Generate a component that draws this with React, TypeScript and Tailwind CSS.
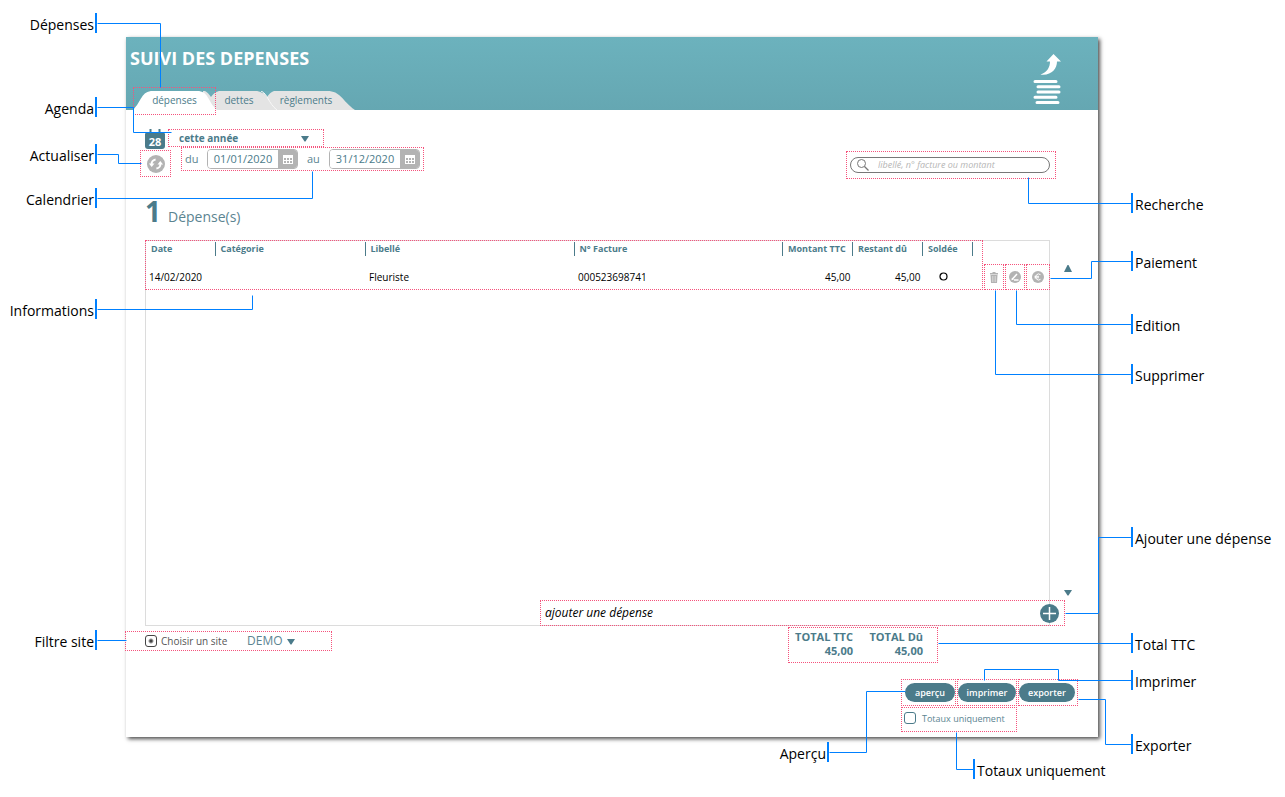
import React, { useState } from "react";

type Side = "left" | "right";

// Callouts hang on the nearest window edge, so they stay put when the sheet grows
const callouts: { text: string; side: Side; place: string }[] = [
  { text: "Dépenses", side: "left", place: "top-[13px] left-0 w-[97px]" },
  { text: "Agenda", side: "left", place: "top-[97px] left-0 w-[97px]" },
  { text: "Actualiser", side: "left", place: "top-[144px] left-0 w-[97px]" },
  { text: "Calendrier", side: "left", place: "top-[188px] left-0 w-[97px]" },
  { text: "Informations", side: "left", place: "top-[299px] left-0 w-[97px]" },
  { text: "Filtre site", side: "left", place: "top-[630px] left-0 w-[97px]" },
  { text: "Aperçu", side: "left", place: "top-[742px] right-[456px]" },
  { text: "Recherche", side: "right", place: "top-[193px] right-0 w-[154px]" },
  { text: "Paiement", side: "right", place: "top-[251px] right-0 w-[154px]" },
  { text: "Edition", side: "right", place: "top-[314px] right-0 w-[154px]" },
  { text: "Supprimer", side: "right", place: "top-[364px] right-0 w-[154px]" },
  { text: "Ajouter une dépense", side: "right", place: "top-[527px] right-0 w-[154px]" },
  { text: "Total TTC", side: "right", place: "top-[633px] right-0 w-[154px]" },
  { text: "Imprimer", side: "right", place: "top-[670px] right-0 w-[154px]" },
  { text: "Exporter", side: "right", place: "top-[734px] right-0 w-[154px]" },
  { text: "Totaux uniquement", side: "right", place: "top-[759px] right-0 w-[312px]" },
];

const leftLines = [
  "97,23 160,23 160,87",
  "97,107 133,107 133,132 171,132",
  "97,154 118,154 118,163 141,163",
  "97,198 312,198 312,171",
  "97,309 252,309 252,295",
  "97,640 126,640",
];

const rightLines = [
  "1131,203 1028,203 1028,177",
  "1131,261 1091,261 1091,278 1050,278",
  "1131,324 1016,324 1016,290",
  "1131,374 995,374 995,290",
  "1131,537 1098,537 1098,613 1065,613",
  "1131,643 938,643",
  "1131,680 1058,680 1058,669 984,669 984,680",
  "1131,744 1105,744 1105,699 1078,699",
  "829,752 866,752 866,691 905,691",
  "973,769 956,769 956,732",
];

function Lines({ points }: { points: string[] }) {
  return (
    <g fill="none" stroke="#0080ff" strokeWidth="1" transform="translate(0.5 0.5)">
      {points.map((p) => (
        <polyline key={p} points={p} />
      ))}
    </g>
  );
}

function Triangle({ up = false }: { up?: boolean }) {
  return (
    <svg className="block" width="8" height="7" viewBox="0 0 8 7" fill="#4b7b8a" aria-hidden="true">
      <path d={up ? "M3.500 0h1L8 7H0Z" : "M0 1h8L4.500 6.500h-1Z"} />
    </svg>
  );
}

function CalendarBadge() {
  return (
    <svg className="block" width="20" height="20" viewBox="0 0 20 20" aria-hidden="true">
      <path d="M5.500 0v4M14.500 0v4" stroke="#4b7b8a" strokeWidth="2" />
      <path d="M0 5a1 1 0 0 1 1-1h18a1 1 0 0 1 1 1v12a3 3 0 0 1-3 3H3a3 3 0 0 1-3-3Z" fill="#4b7b8a" />
      <text
        x="10"
        y="17"
        textAnchor="middle"
        fill="#fff"
        fontSize="11"
        fontWeight="700"
        fontFamily="Open Sans, sans-serif"
      >
        28
      </text>
    </svg>
  );
}

function RefreshIcon() {
  return (
    <svg width="18" height="18" viewBox="0 0 18 18" fill="none" aria-hidden="true">
      <circle cx="9" cy="9" r="9" fill="#b3b3b3" />
      <path d="M4.600 9.400a4.600 4.600 0 0 1 4-4.900M13.400 8.600a4.600 4.600 0 0 1-4 4.900" stroke="#fff" strokeWidth="2" />
      <path d="M1.900 8.600h5.600L4.700 12ZM16.100 9.400h-5.600L13.300 6Z" fill="#fff" />
    </svg>
  );
}

function DateField({ id, label, value }: { id: string; label: string; value: string }) {
  const [date, setDate] = useState(value);
  return (
    <div className="flex items-center">
      <label htmlFor={id} className="w-[22px] text-[11px] leading-4 text-[#5b8491]">
        {label}
      </label>
      <div className="flex h-5 w-[91px] overflow-hidden rounded-[4px] border border-[#b3b3b3]">
        <input
          id={id}
          value={date}
          onChange={(e) => setDate(e.target.value)}
          className="w-[70px] min-w-0 bg-white text-center text-[11px] text-[#4b7b8a] outline-none"
        />
        <button aria-label="Choisir une date" className="flex flex-1 items-center justify-center bg-[#b3b3b3]">
          <svg width="10" height="9" viewBox="0 0 10 9" aria-hidden="true">
            <path d="M0 0h10v9H0Z" fill="#fff" />
            <path d="M1 3h2v2H1ZM4 3h2v2H4ZM7 3h2v2H7ZM1 6h2v2H1ZM4 6h2v2H4ZM7 6h2v2H7Z" fill="#b3b3b3" />
          </svg>
        </button>
      </div>
    </div>
  );
}

const columns = [
  { name: "Date", width: "w-[69px]" },
  { name: "Catégorie", width: "w-[150px]" },
  { name: "Libellé", width: "w-[209px]" },
  { name: "N° Facture", width: "" },
  { name: "Montant TTC", width: "w-[70px]" },
  { name: "Restant dû", width: "w-[70px]" },
  { name: "Soldée", width: "w-[50px]" },
];

function Header() {
  return (
    <header className="flex h-[73px] justify-between bg-linear-to-b from-[#6cb2bd] to-[#65a7b2]">
      <div className="flex flex-col justify-between">
        <h1 className="pt-[9px] pl-1 text-[18px] leading-6 font-bold text-white">SUIVI DES DEPENSES</h1>
        <div className="relative ml-[7px] h-[19px]">
          <svg className="absolute top-0 left-0" width="223" height="19" viewBox="0 0 223 19" aria-hidden="true">
            <path d="M130 19V0H194C208 0 208 9 222 19Z" fill="#e4e4e4" />
            <path d="M70 19V0H122C134 0 133 10 144 19Z" fill="#e4e4e4" />
            {/* notch between the two inactive tabs */}
            <path d="M128 0H141C138 1 136 3 134 6C132 3 130 1 128 0Z" fill="#69adb8" />
            <path d="M128 0C135 3 135 12 144 19" fill="none" stroke="#f8f8f8" />
            <path d="M72 0H86C82 1 80 3 78 6C76 3 74 1 72 0Z" fill="#69adb8" />
            <path d="M0 19C9 10 8 0 20 0H64C76 0 74 10 84 19Z" fill="#fff" />
          </svg>
          <nav className="relative flex h-[17px] text-[10px] leading-4 text-[#4b7b8a]">
            <button className="w-[83px]">dépenses</button>
            <button className="w-[46px]">dettes</button>
            <button className="w-[88px]">règlements</button>
          </nav>
          <div className="pointer-events-none absolute -top-1 left-0 h-7 w-[83px] border border-dotted border-[#f5527c]" />
        </div>
      </div>
      <button aria-label="Retour à la liste" className="mt-4 mr-[37px] h-[52px] w-[28px]">
        <svg className="block" width="28" height="52" viewBox="0 0 28 52" fill="#fff" aria-hidden="true">
          <path d="M7.500 21.500C14.500 19 17 14 17 8.500H13.500L20.500 1 28 8.500H24C24 16 18 23 7.500 21.500Z" />
          <path
            d="M2 28.500h21M5 33.800h21M5 39h21M2 44.300h21M4 49.500h21"
            stroke="#fff"
            strokeWidth="3"
            strokeLinecap="round"
          />
        </svg>
      </button>
    </header>
  );
}

function Filters() {
  return (
    <div className="flex items-start pt-[19px] pl-[14px]">
      <div className="flex w-[31px] flex-col gap-px">
        <button aria-label="Agenda" className="ml-[5px] h-5">
          <CalendarBadge />
        </button>
        <button
          aria-label="Actualiser"
          className="flex h-[27px] w-[31px] items-center justify-center border border-dotted border-[#f5527c]"
        >
          <RefreshIcon />
        </button>
      </div>
      <div className="-ml-[3px]">
        <div className="relative h-[18px] w-[156px] border border-dotted border-[#f5527c]">
          <select
            aria-label="Période"
            className="block h-4 w-full appearance-none pl-[10px] text-[10px] leading-4 font-bold text-[#4b7b8a] outline-none"
          >
            <option>cette année</option>
          </select>
          <span className="pointer-events-none absolute top-[5px] right-[14px]">
            <Triangle />
          </span>
        </div>
        <div className="ml-[13px] flex h-6 w-[243px] items-center gap-[9px] border border-dotted border-[#f5527c] pl-[3px]">
          <DateField id="du" label="du" value="01/01/2020" />
          <DateField id="au" label="au" value="31/12/2020" />
        </div>
      </div>
      <div className="mt-[22px] mr-[42px] ml-auto h-7 w-[210px] border border-dotted border-[#f5527c] pt-[5px] pr-[5px] pl-[3px]">
        <label className="flex h-4 items-center rounded-full border border-[#777] pl-[6px]">
          <svg width="12" height="12" viewBox="0 0 12 12" fill="none" stroke="#777" aria-hidden="true">
            <circle cx="4.500" cy="4.500" r="4" />
            <path d="M7.500 7.500 11.500 11.500" strokeWidth="1.300" />
          </svg>
          <input
            type="search"
            aria-label="Recherche"
            placeholder="libellé, n° facture ou montant"
            className="ml-[9px] min-w-0 flex-1 text-[9px] leading-3 italic outline-none placeholder:text-[#b5b5b5]"
          />
        </label>
      </div>
    </div>
  );
}

function RowActions() {
  const frame = "flex h-[26px] items-center justify-center border border-dotted border-[#f5527c]";
  return (
    <div className="flex w-[67px] gap-px pt-[24px] pl-px">
      <button aria-label="Supprimer" className={`w-5 ${frame}`}>
        <svg width="8" height="11" viewBox="0 0 8 11" fill="#b3b3b3" aria-hidden="true">
          <path d="M0 1h2.500V0h3v1H8v1.500H0ZM.5 3h7l-.5 8H1Z" />
          <path d="M2.500 4v6M4 4v6M5.500 4v6" stroke="#e2e2e2" strokeWidth=".6" />
        </svg>
      </button>
      <button aria-label="Edition" className={`w-5 ${frame}`}>
        <svg width="12" height="12" viewBox="0 0 12 12" aria-hidden="true">
          <circle cx="6" cy="6" r="6" fill="#b3b3b3" />
          <path d="M3 8.500 8 3M5 9h4.500" fill="none" stroke="#fff" strokeWidth="1.500" />
          <path d="M2.500 9.200 3 6.800 4.900 8.600Z" fill="#fff" />
        </svg>
      </button>
      <button aria-label="Paiement" className={`w-6 ${frame}`}>
        <svg width="12" height="12" viewBox="0 0 12 12" fill="none" stroke="#fff" aria-hidden="true">
          <circle cx="6" cy="6" r="6" fill="#b3b3b3" stroke="none" />
          <path d="M8.500 3.700A3 3 0 1 0 8.500 8.300M2.500 5.300h4.500M2.500 6.800h4.500" />
        </svg>
      </button>
    </div>
  );
}

function ExpenseList() {
  return (
    <div className="flex pl-[19px]">
      <div className="flex h-[386px] min-w-0 flex-1 flex-col shadow-[inset_0_0_0_1px_#dcdcdc]">
        <div className="flex">
          <div className="h-[50px] min-w-0 flex-1 border border-dotted border-[#f5527c] pt-px pr-[9px]">
            <table className="w-full table-fixed border-collapse text-left text-[10px] text-black">
              <thead>
                <tr className="h-[14px] text-[9px] leading-[14px] text-[#4b7b8a]">
                  {columns.map((c) => (
                    <th
                      key={c.name}
                      className={`border-r border-[#4b7b8a] pl-[5px] align-top whitespace-nowrap ${c.width}`}
                    >
                      {c.name}
                    </th>
                  ))}
                </tr>
              </thead>
              <tbody>
                <tr className="h-[32px] leading-4">
                  <td className="pt-[9px] pl-[3px]">14/02/2020</td>
                  <td />
                  <td className="pt-[9px] pl-1">Fleuriste</td>
                  <td className="pt-[9px] pl-1">000523698741</td>
                  <td className="pt-[9px] pr-[2px] text-right">45,00</td>
                  <td className="pt-[9px] pr-[2px] text-right">45,00</td>
                  <td className="pt-[9px]">
                    <svg className="ml-4" width="9" height="9" viewBox="0 0 9 9" fill="none" aria-label="Non soldée">
                      <circle cx="4.500" cy="4.500" r="3.500" stroke="#000" strokeWidth="1.200" />
                    </svg>
                  </td>
                </tr>
              </tbody>
            </table>
          </div>
          <RowActions />
        </div>
        <form
          className="mt-auto -mr-[15px] flex h-[26px] w-[525px] items-center self-end border border-dotted border-[#f5527c] pr-[5px] pl-1"
          onSubmit={(e) => e.preventDefault()}
        >
          <input
            aria-label="Ajouter une dépense"
            placeholder="ajouter une dépense"
            className="min-w-0 flex-1 text-[12px] leading-4 italic outline-none placeholder:text-black"
          />
          <button aria-label="Ajouter">
            <svg className="block" width="19" height="19" viewBox="0 0 19 19" aria-hidden="true">
              <circle cx="9.500" cy="9.500" r="9.500" fill="#4b7b8a" />
              <path d="M3 9.500h13M9.500 3v13" stroke="#fff" strokeWidth="1.500" />
            </svg>
          </button>
        </form>
      </div>
      <div className="flex w-[48px] flex-col justify-between pt-6 pb-[30px] pl-[14px]">
        <button aria-label="Monter" className="h-2 w-2">
          <Triangle up />
        </button>
        <button aria-label="Descendre" className="h-2 w-2">
          <Triangle />
        </button>
      </div>
    </div>
  );
}

function Footer() {
  const pill = "block h-[19px] w-full rounded-full bg-[#4b7b8a] text-[9px] leading-3 font-semibold text-white";
  return (
    <footer className="pt-px">
      <div className="flex items-start justify-between pr-[160px]">
        <div className="mt-1 -ml-px flex h-5 w-[207px] items-center border border-dotted border-[#f5527c] pl-[19px]">
          <input
            id="site"
            type="checkbox"
            className="h-3 w-3 appearance-none rounded-[3px] border border-[#444] bg-[radial-gradient(circle,#444_1px,transparent_3px)]"
          />
          <label htmlFor="site" className="w-[90px] pl-1 text-[10px] leading-4 whitespace-nowrap text-[#555]">
            Choisir un site
          </label>
          <span className="relative flex items-center">
            <select
              aria-label="Site"
              className="w-[52px] appearance-none text-[12px] leading-4 text-[#5b8491] outline-none"
            >
              <option>DEMO</option>
            </select>
            <span className="pointer-events-none absolute right-[4px]">
              <Triangle />
            </span>
          </span>
        </div>
        <dl className="flex h-9 w-[150px] border border-dotted border-[#f5527c] pt-[2px] text-right text-[11px] leading-[14px] font-bold text-[#4b7b8a]">
          <div className="w-16">
            <dt className="whitespace-nowrap">TOTAL TTC</dt>
            <dd>45,00</dd>
          </div>
          <div className="w-[70px]">
            <dt className="whitespace-nowrap">TOTAL Dû</dt>
            <dd>45,00</dd>
          </div>
        </dl>
      </div>
      <div className="mt-4 mr-[20px] ml-auto w-[177px]">
        <div className="flex h-[27px] gap-px">
          <div className="w-[55px] border border-dotted border-[#f5527c] py-[3px] pl-[3px]">
            <button className={pill}>aperçu</button>
          </div>
          <div className="w-[60px] border border-dotted border-[#f5527c] py-[3px]">
            <button className={pill}>imprimer</button>
          </div>
          <div className="w-[60px] border border-dotted border-[#f5527c] py-[3px] pr-[2px]">
            <button className={pill}>exporter</button>
          </div>
        </div>
        <div className="mt-px flex h-[25px] w-[116px] items-start border border-dotted border-[#f5527c] pt-1 pl-[2px]">
          <input
            id="totaux"
            type="checkbox"
            className="h-3 w-3 appearance-none rounded-[3px] border border-[#4b7b8a]"
          />
          <label htmlFor="totaux" className="pl-[6px] text-[9px] leading-[13px] whitespace-nowrap text-[#5b8491]">
            Totaux uniquement
          </label>
        </div>
      </div>
      <div className="h-[5px]" />
    </footer>
  );
}

export default function App() {
  return (
    <div className="relative min-w-[1100px] bg-white pt-[37px] pr-[187px] pb-[59px] pl-[126px] font-['Open_Sans',sans-serif]">
      <main className="bg-white shadow-[2px_2px_4px_0_rgba(0,0,0,0.7)]">
        <Header />
        <Filters />
        <h2 className="mt-4 mb-[13px] flex h-8 items-baseline pl-[19px] text-[#4b7b8a]">
          <span className="w-[23px] text-[28px] leading-8 font-bold">1</span>
          <span className="text-[14px] leading-5 text-[#5b8491]">Dépense(s)</span>
        </h2>
        <ExpenseList />
        <Footer />
      </main>

      {/* Callout connectors */}
      <svg className="pointer-events-none absolute top-0 left-0" width="430" height="797" viewBox="0 0 430 797">
        <Lines points={leftLines} />
      </svg>
      <svg className="pointer-events-none absolute top-0 right-0" width="485" height="797" viewBox="800 0 485 797">
        <Lines points={rightLines} />
      </svg>

      {callouts.map((c) => (
        <p
          key={c.text}
          className={`absolute h-5 border-[#0080ff] text-[14px] leading-6 whitespace-nowrap text-black ${
            c.side === "left" ? "border-r-2 pr-px text-right" : "border-l-2 pl-[2px]"
          } ${c.place}`}
        >
          {c.text}
        </p>
      ))}
    </div>
  );
}
